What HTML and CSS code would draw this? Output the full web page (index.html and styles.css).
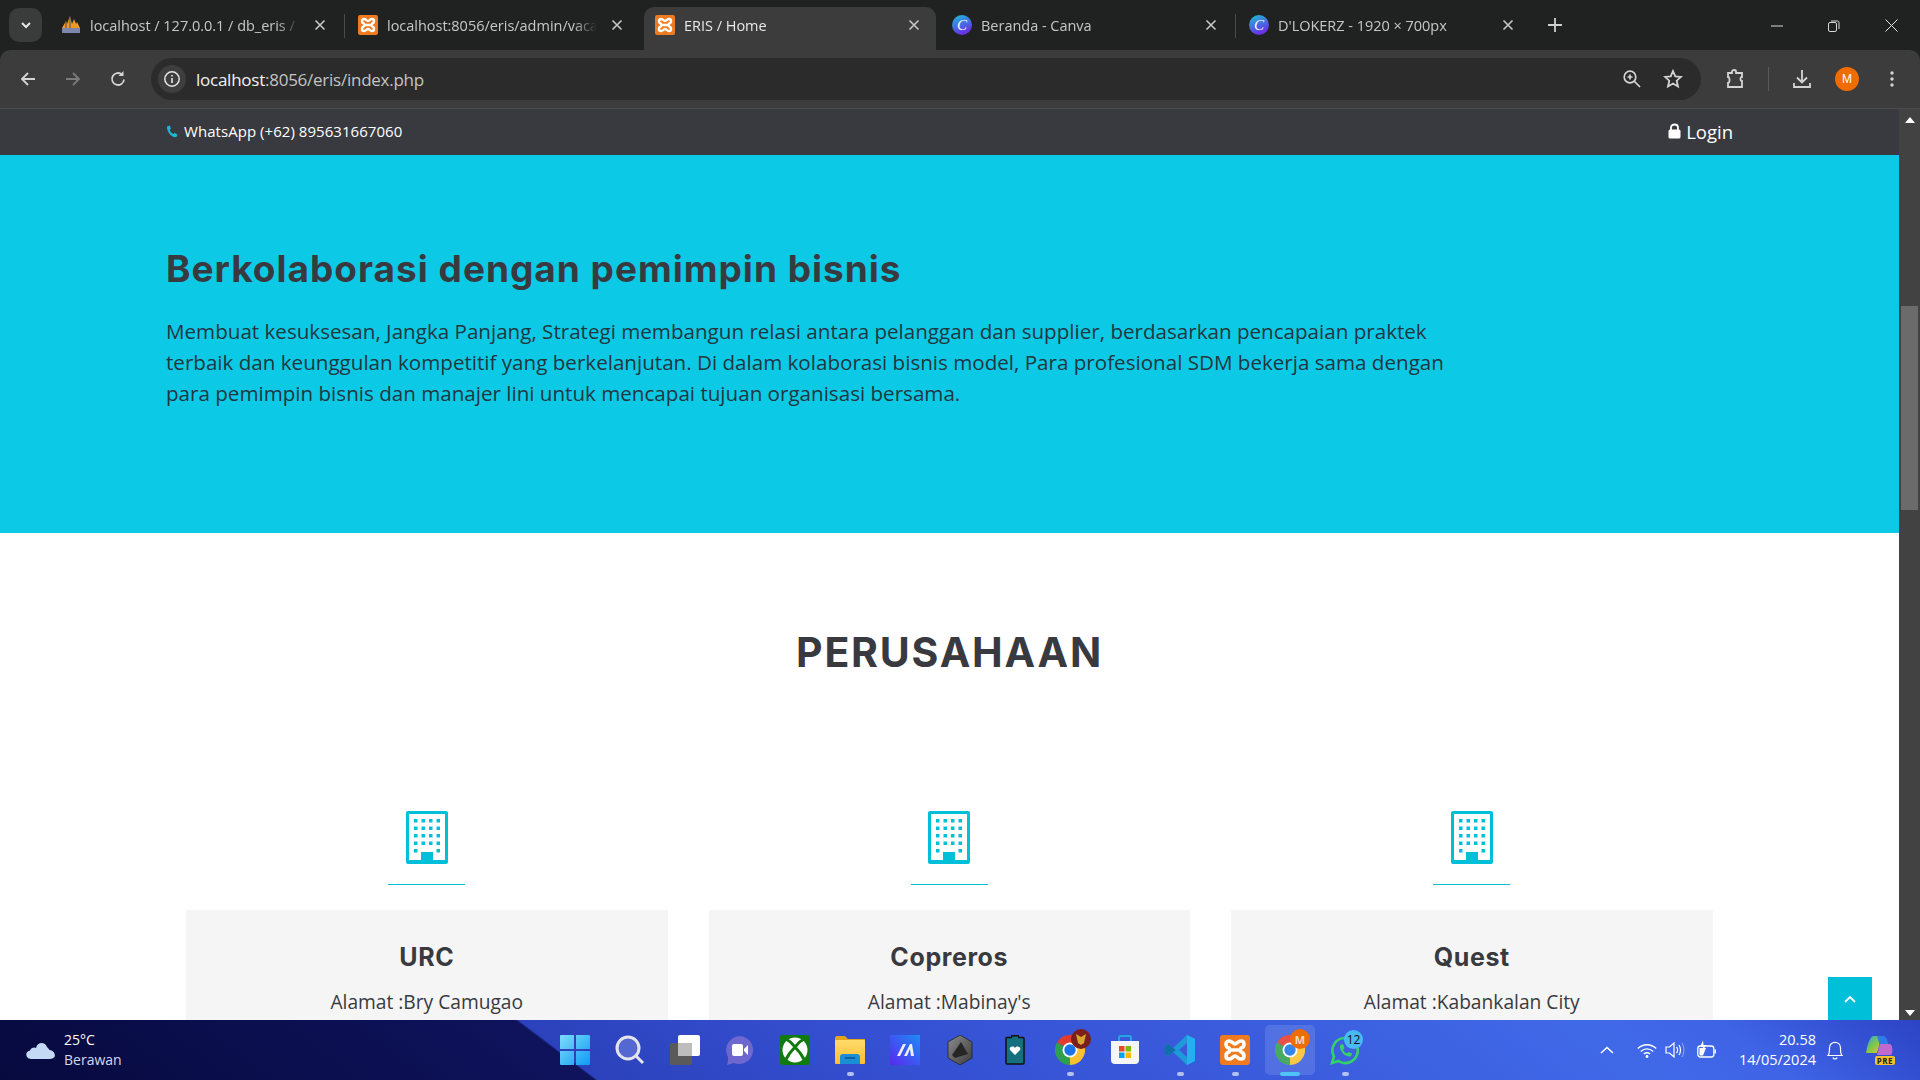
FILE: index.html
```html
<!DOCTYPE html>
<html lang="id">
<head>
    <meta charset="UTF-8">
    <title>ERIS / Home</title>
    <link rel="stylesheet" href="styles.css">
</head>
<body>
    <svg class="defs" width="0" height="0">
        <defs>
            <linearGradient id="canvaGrad" x1="0" y1="0" x2="0.4" y2="1">
                <stop offset="0" stop-color="#17c3d6"/>
                <stop offset="1" stop-color="#6a2ee8"/>
            </linearGradient>
            <linearGradient id="folderGrad" x1="0" y1="0" x2="0" y2="1">
                <stop offset="0" stop-color="#ffdc6c"/>
                <stop offset="1" stop-color="#fbbd2e"/>
            </linearGradient>
            <linearGradient id="vivaGrad" x1="0" y1="1" x2="1" y2="0">
                <stop offset="0" stop-color="#5b27f0"/>
                <stop offset="1" stop-color="#1c8cf5"/>
            </linearGradient>
            <linearGradient id="hexGrad" x1="0" y1="0" x2="1" y2="1">
                <stop offset="0" stop-color="#8d8d8d"/>
                <stop offset="1" stop-color="#3c3c3c"/>
            </linearGradient>
            <linearGradient id="winGrad" x1="0" y1="0" x2="1" y2="1">
                <stop offset="0" stop-color="#7fdcfb"/>
                <stop offset="1" stop-color="#0d9bf5"/>
            </linearGradient>
            <linearGradient id="copilotGrad" x1="0" y1="0" x2="1" y2="1">
                <stop offset="0" stop-color="#2a9cf0"/>
                <stop offset="0.5" stop-color="#7cc84a"/>
                <stop offset="1" stop-color="#f5c02c"/>
            </linearGradient>
            <symbol id="i-xampp" viewBox="0 0 30 30">
                <rect width="30" height="30" rx="3" fill="#ef7a20"/>
                <path d="M9 6C5 6 5 12 9 13L10 15L9 17C5 18 5 24 9 24C12 24 13 21 15 21C17 21 18 24 21 24C25 24 25 18 21 17L20 15L21 13C25 12 25 6 21 6C18 6 17 9 15 9C13 9 12 6 9 6ZM10 15H20" fill="none" stroke="#fff" stroke-width="3.600"/>
            </symbol>
            <symbol id="i-chrome" viewBox="0 0 30 30">
                <path d="M2 7.5A15 15 0 0 1 28 7.5L15 15Z" fill="#e33b2e"/>
                <path d="M28 7.5A15 15 0 0 1 15 30L15 15Z" fill="#fbc02d"/>
                <path d="M15 30A15 15 0 0 1 2 7.5L15 15Z" fill="#2e9e4f"/>
                <circle cx="15" cy="15" r="7.5" fill="#fff"/>
                <circle cx="15" cy="15" r="5.7" fill="#1a73e8"/>
            </symbol>
            <symbol id="i-canva" viewBox="0 0 20 20">
                <circle cx="10" cy="10" r="10" fill="url(#canvaGrad)"/>
                <text x="10" y="15" text-anchor="middle" font-family="Liberation Serif, serif" font-style="italic" font-size="15" fill="#fff">C</text>
            </symbol>
            <symbol id="i-close" viewBox="0 0 12 12">
                <path d="M1.5 1.5L10.5 10.5M10.5 1.5L1.5 10.5" stroke="#c7c7c7" stroke-width="1.6" fill="none"/>
            </symbol>
            <symbol id="i-building" viewBox="0 0 42 53">
                <rect width="42" height="53" rx="2" fill="#00bfd8"/>
                <rect x="3" y="3" width="36" height="46" fill="#fff"/>
                <path d="M8 8h3.500v3.500h-3.500zM15.500 8h3.500v3.500h-3.500zM23 8h3.500v3.500h-3.500zM30.500 8h3.500v3.500h-3.500zM8 15.500h3.500v3.500h-3.500zM15.500 15.500h3.500v3.500h-3.500zM23 15.500h3.500v3.500h-3.500zM30.500 15.500h3.500v3.500h-3.500zM8 23h3.500v3.500h-3.500zM15.500 23h3.500v3.500h-3.500zM23 23h3.500v3.500h-3.500zM30.500 23h3.500v3.500h-3.500zM8 30.500h3.500v3.500h-3.500zM15.500 30.500h3.500v3.500h-3.500zM23 30.500h3.500v3.500h-3.500zM30.500 30.500h3.500v3.500h-3.500zM8 38h3.500v3.500h-3.500zM30.500 38h3.500v3.500h-3.500zM15 41h12v9h-12z" fill="#00bfd8"/>
            </symbol>
        </defs>
    </svg>

    <header class="tabstrip">
        <button class="tab-search">
            <svg width="12" height="12" viewBox="0 0 12 12"><path d="M2 4L6 8L10 4" fill="none" stroke="#e6e6e6" stroke-width="2"/></svg>
        </button>
        <div class="tabs">
            <div class="tab">
                <svg class="favicon" viewBox="0 0 20 20">
                    <path d="M1 13L5 6L6 9L9 1L11 9L13 4L15 9L16 7L19 13Z" fill="#f29a1f"/>
                    <path d="M9 2L9 13M5 7L5 13" stroke="#3d4a78" stroke-width="1"/>
                    <rect x="1" y="13" width="18" height="5" fill="#7d86ad"/>
                </svg>
                <span class="tab-title">localhost / 127.0.0.1 / db_eris / t</span>
                <svg class="tab-close"><use href="#i-close"/></svg>
            </div>
            <div class="tab sep-right">
                <svg class="favicon"><use href="#i-xampp"/></svg>
                <span class="tab-title">localhost:8056/eris/admin/vacan</span>
                <svg class="tab-close"><use href="#i-close"/></svg>
            </div>
            <div class="tab active">
                <svg class="favicon"><use href="#i-xampp"/></svg>
                <span class="tab-title">ERIS / Home</span>
                <svg class="tab-close"><use href="#i-close"/></svg>
            </div>
            <div class="tab sep-right">
                <svg class="favicon"><use href="#i-canva"/></svg>
                <span class="tab-title">Beranda - Canva</span>
                <svg class="tab-close"><use href="#i-close"/></svg>
            </div>
            <div class="tab sep-right">
                <svg class="favicon"><use href="#i-canva"/></svg>
                <span class="tab-title">D'LOKERZ - 1920 × 700px</span>
                <svg class="tab-close"><use href="#i-close"/></svg>
            </div>
        </div>
        <svg class="new-tab" width="14" height="14" viewBox="0 0 14 14"><path d="M7 0V14M0 7H14" stroke="#d0d0d0" stroke-width="1.800"/></svg>
        <div class="win-controls">
            <svg width="12" height="12" viewBox="0 0 12 12"><path d="M0 6H12" stroke="#d8d8d8"/></svg>
            <svg width="12" height="12" viewBox="0 0 12 12"><rect x="0.500" y="2.500" width="8" height="9" rx="1.500" fill="none" stroke="#d8d8d8"/><path d="M3 1H9.500C10.500 1 11 1.500 11 2.500V9" fill="none" stroke="#d8d8d8"/></svg>
            <svg width="13" height="13" viewBox="0 0 13 13"><path d="M0.500 0.500L12.500 12.500M12.500 0.500L0.500 12.500" stroke="#e6e6e6"/></svg>
        </div>
    </header>

    <nav class="toolbar">
        <button class="tool-btn">
            <svg width="18" height="18" viewBox="0 0 18 18"><path d="M16 9H3M9 3L3 9L9 15" fill="none" stroke="#d4d4d4" stroke-width="1.800"/></svg>
        </button>
        <button class="tool-btn">
            <svg width="18" height="18" viewBox="0 0 18 18"><path d="M2 9H15M9 3L15 9L9 15" fill="none" stroke="#7b7b7b" stroke-width="1.800"/></svg>
        </button>
        <button class="tool-btn">
            <svg width="18" height="18" viewBox="0 0 18 18"><path d="M15 9.500A6 6 0 1 1 13 4.500" fill="none" stroke="#d4d4d4" stroke-width="1.800"/><path d="M14.500 1V6H9.500Z" fill="#d4d4d4"/></svg>
        </button>
        <div class="omnibox">
            <span class="info-chip">
                <svg width="18" height="18" viewBox="0 0 18 18"><circle cx="9" cy="9" r="7.200" fill="none" stroke="#e6e6e6" stroke-width="1.500"/><path d="M9 8V13M9 5V6.500" stroke="#e6e6e6" stroke-width="1.600"/></svg>
            </span>
            <span class="url"><b>localhost</b>:8056/eris/index.php</span>
            <span class="omni-actions">
                <svg width="20" height="20" viewBox="0 0 20 20"><circle cx="8" cy="8" r="5.800" fill="none" stroke="#d4d4d4" stroke-width="1.700"/><path d="M12 12L18 18M5.500 8H10.500M8 5.500V10.500" stroke="#d4d4d4" stroke-width="1.700"/></svg>
                <svg width="20" height="20" viewBox="0 0 20 20"><path d="M10 2L12.300 7.400L18 7.900L13.700 11.700L15 17.500L10 14.500L5 17.500L6.300 11.700L2 7.900L7.700 7.400Z" fill="none" stroke="#d4d4d4" stroke-width="1.800"/></svg>
            </span>
        </div>
        <button class="tool-btn after-omni">
            <svg width="20" height="22" viewBox="0 0 20 22"><path d="M3 5H7V3.500C7 1.500 11 1.500 11 3.500V5H17V9C15 8.500 15 13.500 17 13V19H3V15C5 15.500 5 8.500 3 9Z" fill="none" stroke="#d4d4d4" stroke-width="1.800"/></svg>
        </button>
        <span class="tool-divider"></span>
        <button class="tool-btn">
            <svg width="20" height="20" viewBox="0 0 20 20"><path d="M10 1V13M5 8.500L10 13.500L15 8.500M2 14V18H18V14" fill="none" stroke="#d4d4d4" stroke-width="1.800"/></svg>
        </button>
        <button class="tool-btn"><span class="avatar">M</span></button>
        <button class="tool-btn">
            <svg width="6" height="18" viewBox="0 0 6 18"><circle cx="3" cy="3" r="1.700" fill="#d4d4d4"/><circle cx="3" cy="9" r="1.700" fill="#d4d4d4"/><circle cx="3" cy="15" r="1.700" fill="#d4d4d4"/></svg>
        </button>
    </nav>

    <div class="window">
        <main class="page">
            <div class="topbar">
                <span class="topbar-phone">
                    <svg width="12" height="13" viewBox="0 0 12 13"><path d="M1 1.500L3.500 0.500L5 3.500L3.700 4.700C4.200 6.500 5.500 8.200 7.200 9L8.500 7.800L11.500 9.800L10.300 12.300C5.500 12.800 0.500 6.500 1 1.500Z" fill="#1fb6d2"/></svg>
                    WhatsApp (+62) 895631667060
                </span>
                <span class="topbar-login">
                    <svg width="13" height="16" viewBox="0 0 13 16"><path d="M3 7V4.500C3 0.500 10 0.500 10 4.500V7" fill="none" stroke="#fff" stroke-width="1.800"/><rect x="0.500" y="6.500" width="12" height="9" rx="1.500" fill="#fff"/></svg>
                    Login
                </span>
            </div>

            <section class="hero">
                <h2>Berkolaborasi dengan pemimpin bisnis</h2>
                <p>Membuat kesuksesan, Jangka Panjang, Strategi membangun relasi antara pelanggan dan supplier, berdasarkan pencapaian praktek terbaik dan keunggulan kompetitif yang berkelanjutan. Di dalam kolaborasi bisnis model, Para profesional SDM bekerja sama dengan para pemimpin bisnis dan manajer lini untuk mencapai tujuan organisasi bersama.</p>
            </section>

            <section class="companies">
                <h2>PERUSAHAAN</h2>
                <div class="company-grid">
                    <div class="company">
                        <svg class="company-icon"><use href="#i-building"/></svg>
                        <span class="company-line"></span>
                        <div class="company-card">
                            <h3>URC</h3>
                            <p>Alamat :Bry Camugao</p>
                        </div>
                    </div>
                    <div class="company">
                        <svg class="company-icon"><use href="#i-building"/></svg>
                        <span class="company-line"></span>
                        <div class="company-card">
                            <h3>Copreros</h3>
                            <p>Alamat :Mabinay's</p>
                        </div>
                    </div>
                    <div class="company">
                        <svg class="company-icon"><use href="#i-building"/></svg>
                        <span class="company-line"></span>
                        <div class="company-card">
                            <h3>Quest</h3>
                            <p>Alamat :Kabankalan City</p>
                        </div>
                    </div>
                </div>
            </section>

            <a class="to-top">
                <svg width="12" height="8" viewBox="0 0 12 8"><path d="M1 7L6 2L11 7" fill="none" stroke="#fff" stroke-width="1.800"/></svg>
            </a>
        </main>

        <aside class="scrollbar">
            <span class="arrow-up"></span>
            <span class="scroll-thumb"></span>
            <span class="arrow-down"></span>
        </aside>
    </div>

    <footer class="taskbar">
        <div class="weather">
            <svg width="31" height="20" viewBox="0 0 31 20"><path d="M6 19C1 19 -1 12 5 10.500C6 7 10 7 11 8C12 2 20 1 22 7C23 8 24 9 24.500 10C30 10 33 19 25 19Z" fill="#c4d9f4"/></svg>
            <div class="weather-text">
                <span class="temp">25°C</span>
                <span>Berawan</span>
            </div>
        </div>

        <div class="dock">
            <span class="dock-item">
                <svg viewBox="0 0 30 30"><path d="M0 1Q0 0 1 0H14V14H0ZM16 0H29Q30 0 30 1V14H16ZM0 16H14V30H1Q0 30 0 29ZM16 16H30V29Q30 30 29 30H16Z" fill="url(#winGrad)"/></svg>
            </span>
            <span class="dock-item">
                <svg viewBox="0 0 30 30"><circle cx="13" cy="13" r="11" fill="#5567d0" stroke="#e4e4ee" stroke-width="3"/><path d="M21 21L28 28" stroke="#e4e4ee" stroke-width="3"/></svg>
            </span>
            <span class="dock-item">
                <svg viewBox="0 0 30 30"><rect x="0" y="8" width="22" height="22" rx="2" fill="#5a5a5a"/><rect x="8" y="0" width="22" height="21" rx="2" fill="#fff"/><rect x="8" y="8" width="14" height="13" fill="#bdbdbd"/></svg>
            </span>
            <span class="dock-item">
                <svg viewBox="0 0 30 30"><path d="M15 1A14 14 0 1 1 9 28L2 30C3 27 3 26 3 22A14 14 0 0 1 15 1Z" fill="#6e67cf"/><rect x="7" y="9" width="11" height="12" rx="2" fill="#fff"/><path d="M19 14L23 10V20L19 16Z" fill="#fff"/></svg>
            </span>
            <span class="dock-item">
                <svg viewBox="0 0 30 30"><rect width="30" height="30" rx="2" fill="#107c10"/><circle cx="15" cy="15" r="12.500" fill="#fff"/><path d="M6 4C10 6 13 9 15 12C17 9 20 6 24 4M5 26C8 20 11 16 15 12C19 16 22 20 25 26" fill="none" stroke="#107c10" stroke-width="3"/></svg>
            </span>
            <span class="dock-item has-dot">
                <svg viewBox="0 0 30 30"><path d="M0 3Q0 1 2 1H10L13 4H30V10H0Z" fill="#e5a21c"/><rect y="5" width="30" height="24" rx="1" fill="url(#folderGrad)"/><path d="M5 29V22Q5 19 8 19H22Q25 19 25 22V29Z" fill="#1b8fd6"/><rect x="10" y="22" width="10" height="2" fill="#0f5f9e"/></svg>
            </span>
            <span class="dock-item">
                <svg viewBox="0 0 30 30"><rect width="30" height="30" fill="url(#vivaGrad)"/><path d="M7 21L13 9H16L10 21ZM14 21L20 9H22L24 21H21L20 14L17 21Z" fill="#fff" opacity="0.900"/></svg>
            </span>
            <span class="dock-item">
                <svg viewBox="0 0 30 30"><path d="M15 0L27 7V23L15 30L3 23V7Z" fill="url(#hexGrad)" stroke="#222" stroke-width="0.800"/><path d="M16 7L23 19L10 23L7 20Z" fill="#262626"/></svg>
            </span>
            <span class="dock-item">
                <svg viewBox="0 0 30 30"><rect x="11" y="0" width="8" height="4" fill="#111"/><rect x="6" y="2.500" width="18" height="26.500" rx="1" fill="#14707f" stroke="#111" stroke-width="1.500"/><rect x="12" y="1.500" width="6" height="3" fill="#14707f"/><path d="M15 20L10 15C8.500 12 13 10 15 13C17 10 21.500 12 20 15Z" fill="#fff"/></svg>
            </span>
            <span class="dock-item has-dot">
                <svg viewBox="0 0 30 30"><use href="#i-chrome"/></svg>
                <svg class="badge-shield" viewBox="0 0 20 20"><circle cx="10" cy="10" r="10" fill="#7a1f1c"/><path d="M5 5L10 8L15 5L13 14L10 16L7 14Z" fill="#d9a531"/></svg>
            </span>
            <span class="dock-item">
                <svg viewBox="0 0 30 30"><path d="M9 7V3Q9 1 11 1H19Q21 1 21 3V7" fill="none" stroke="#22a7e0" stroke-width="2"/><path d="M1 6H29V25Q29 29 25 29H5Q1 29 1 25Z" fill="#f6f6f6"/><rect x="9" y="11" width="5.500" height="5.500" fill="#e8472c"/><rect x="15.500" y="11" width="5.500" height="5.500" fill="#7fba00"/><rect x="9" y="17.500" width="5.500" height="5.500" fill="#00a4ef"/><rect x="15.500" y="17.500" width="5.500" height="5.500" fill="#ffb900"/></svg>
            </span>
            <span class="dock-item has-dot">
                <svg viewBox="0 0 30 30"><path d="M22 0L30 4V26L22 30L8 17L3 21L0 19V11L3 9L8 13ZM22 8L14 15L22 22Z" fill="#1e9ad8"/><path d="M22 0L30 4V26L22 30Z" fill="#27aef0"/><path d="M3 9L0 11V19L3 21L8 17L11 15L8 13Z" fill="#0f6fa8"/></svg>
            </span>
            <span class="dock-item has-dot">
                <svg viewBox="0 0 30 30"><use href="#i-xampp"/></svg>
            </span>
            <span class="dock-item has-dash is-active">
                <svg viewBox="0 0 30 30"><use href="#i-chrome"/></svg>
                <span class="badge-m">M</span>
            </span>
            <span class="dock-item has-dot">
                <svg viewBox="0 0 30 30"><path d="M15 3A12.500 12.500 0 1 1 8.500 26L2 28L4 21.500A12.500 12.500 0 0 1 15 3Z" fill="none" stroke="#35d366" stroke-width="2.600"/><path d="M10 10L13 9L14.500 13L13 14.500C14 16.500 15 17.500 17 18.500L18.500 17L22 18.500L21 21.500C15.500 22.500 9 16 10 10Z" fill="#35d366"/></svg>
                <span class="badge-count">12</span>
            </span>
        </div>

        <div class="tray">
            <svg class="tray-caret" width="14" height="8" viewBox="0 0 14 8"><path d="M1 7L7 1.500L13 7" fill="none" stroke="#fff" stroke-width="1.600"/></svg>
            <svg class="tray-wifi" width="20" height="15" viewBox="0 0 20 15"><path d="M0.800 5.500C6 0.500 14 0.500 19.200 5.500M3.800 8.500C7.500 5 12.500 5 16.200 8.500M6.800 11C8.700 9.500 11.300 9.500 13.200 11" fill="none" stroke="#fff" stroke-width="1.300"/><circle cx="10" cy="13.500" r="1.400" fill="#fff"/></svg>
            <svg class="tray-vol" width="20" height="18" viewBox="0 0 20 18"><path d="M1 6H4.500L9 2V16L4.500 12H1Z" fill="none" stroke="#fff" stroke-width="1.200"/><path d="M11.500 6C13 7.500 13 10.500 11.500 12M14 4C16 6.500 16 11.500 14 14" fill="none" stroke="#fff" stroke-width="1.200"/><path d="M17 2C19.500 6 19.500 12 17 16" fill="none" stroke="#9db0ee" stroke-width="1"/></svg>
            <svg class="tray-batt" width="20" height="20" viewBox="0 0 20 20"><rect x="0.800" y="6" width="16" height="11" rx="2.500" fill="none" stroke="#fff" stroke-width="1.300"/><path d="M17.500 9.500H19V13.500H17.500Z" fill="#fff"/><path d="M2.500 8H9L6 15.500H2.500Z" fill="#fff"/><path d="M6 0.500L3 7H6L5 11L9.500 5H6.500Z" fill="#fff"/></svg>
            <div class="clock">
                <span>20.58</span>
                <span>14/05/2024</span>
            </div>
            <svg class="tray-bell" width="16" height="19" viewBox="0 0 16 19"><path d="M1 14.500C2.500 13 2.500 11 2.500 7C2.500 -0.500 13.500 -0.500 13.500 7C13.500 11 13.500 13 15 14.500Z" fill="none" stroke="#fff" stroke-width="1.200"/><path d="M6 16.500C6.500 18.500 9.500 18.500 10 16.500" fill="none" stroke="#fff" stroke-width="1.200"/></svg>
            <span class="copilot">
                <svg width="28" height="24" viewBox="0 0 28 24"><path d="M8 1H17L12 18H1C2 12 4 3 8 1Z" fill="url(#copilotGrad)"/><path d="M12 1H19C22 2 23 8 24 11H15Z" fill="#2f7ce8"/><path d="M15 9H25C28 10 28 18 26 20H12Z" fill="#c06ad0"/></svg>
                <span class="pre">PRE</span>
            </span>
        </div>
    </footer>
</body>
</html>
```

FILE: styles.css
```css
* {
    box-sizing: border-box;
}
html, body {
    height: 100%;
}
body {
    margin: 0;
    display: flex;
    flex-direction: column;
    height: 1080px;
    overflow: hidden;
    background: #202222;
    font-family: 'Open Sans', sans-serif;
}
button {
    background: none;
    border: none;
    padding: 0;
}
.defs {
    position: absolute;
}

/* browser tabs */
.tabstrip {
    height: 50px;
    display: flex;
    align-items: flex-end;
    background: #202222;
    position: relative;
}
.tab-search {
    width: 33px;
    height: 34px;
    margin: 0 8px 8px 9px;
    border-radius: 10px;
    background: #3a3b3b;
    display: flex;
    align-items: center;
    justify-content: center;
}
.tabs {
    display: flex;
    gap: 5px;
}
.tab {
    width: 292px;
    height: 43px;
    padding: 0 16px 7px 11px;
    display: flex;
    align-items: center;
    gap: 9px;
    color: #c7c7c7;
    font-size: 14.5px;
    border-radius: 10px 10px 0 0;
    position: relative;
}
.tab.active {
    background: #3c3c3c;
    color: #e8e8e8;
}
.sep-right::before {
    content: '';
    position: absolute;
    left: -3px;
    top: 7px;
    width: 1px;
    height: 24px;
    background: #4a4c4c;
}
.tab.active + .tab::before {
    display: none;
}
.favicon {
    width: 20px;
    height: 20px;
    flex: none;
}
.tab-title {
    flex: 1;
    white-space: nowrap;
    overflow: hidden;
    letter-spacing: -0.02px;
    -webkit-mask-image: linear-gradient(to right, #000 88%, transparent 99%);
}
.tab-close {
    width: 12px;
    height: 12px;
    flex: none;
    margin-left: 3px;
}
.new-tab {
    margin: 0 0 18px 18px;
}
.win-controls {
    margin-left: auto;
    display: flex;
    align-items: center;
    gap: 45px;
    padding: 0 22px 18px 0;
}

/* browser toolbar */
.toolbar {
    height: 59px;
    padding: 0 10px;
    display: flex;
    align-items: center;
    gap: 9px;
    background: #3c3c3c;
    border-bottom: 1px solid #4b4b4b;
    border-radius: 10px 10px 0 0;
}
.tool-btn {
    width: 36px;
    height: 36px;
    flex: none;
    display: flex;
    align-items: center;
    justify-content: center;
}
.omnibox {
    width: 1552px;
    height: 42px;
    margin-left: 6px;
    padding: 0 7px;
    display: flex;
    align-items: center;
    background: #2b2b2b;
    border-radius: 21px;
}
.info-chip {
    width: 28px;
    height: 28px;
    margin-right: 10px;
    border-radius: 50%;
    background: #3e3e3e;
    display: flex;
    align-items: center;
    justify-content: center;
}
.url {
    font-size: 17px;
    letter-spacing: -0.25px;
    color: #c4c4c4;
}
.url b {
    font-weight: 400;
    color: #f2f2f2;
}
.omni-actions {
    margin-left: auto;
    display: flex;
    gap: 21px;
    padding-right: 11px;
}
.after-omni {
    margin-left: 7px;
}
.tool-divider {
    width: 1px;
    height: 24px;
    margin: 0 6px;
    background: #5a5a5a;
}
.avatar {
    width: 24px;
    height: 24px;
    border-radius: 50%;
    background: #ef6c00;
    color: #fff;
    font-size: 12px;
    display: flex;
    align-items: center;
    justify-content: center;
}

/* page area */
.window {
    flex: 1;
    min-height: 0;
    display: flex;
}
.page {
    flex: 1;
    min-width: 0;
    background: #fff;
    overflow: hidden;
    position: relative;
}
.topbar {
    height: 46px;
    padding: 0 166px 2px 166px;
    display: flex;
    align-items: center;
    justify-content: space-between;
    background: #383a3f;
    color: #fff;
}
.topbar-phone {
    display: flex;
    align-items: center;
    gap: 6px;
    font-size: 15px;
    letter-spacing: 0.05px;
}
.topbar-login {
    display: flex;
    align-items: center;
    gap: 5px;
    font-size: 18.5px;
}
.hero {
    height: 378px;
    padding: 92px 0 0 166px;
    background: #0ccae6;
}
.hero h2 {
    margin: 0 0 25px;
    font-family: 'Inter', sans-serif;
    font-size: 37px;
    font-weight: 700;
    letter-spacing: 1px;
    line-height: 44px;
    color: #383a3f;
}
.hero p {
    width: 1290px;
    margin: 0;
    font-size: 20.6px;
    line-height: 31px;
    color: #22363f;
}
.companies {
    padding-top: 95px;
}
.companies h2 {
    margin: 0 0 135px;
    text-align: center;
    font-family: 'Inter', sans-serif;
    font-size: 41px;
    font-weight: 700;
    letter-spacing: 1.8px;
    line-height: 48px;
    color: #383a3f;
}
.company-grid {
    display: grid;
    grid-template-columns: repeat(3, 481.5px);
    gap: 41px;
    padding-left: 186px;
}
.company {
    display: flex;
    flex-direction: column;
    align-items: center;
}
.company-icon {
    width: 42px;
    height: 53px;
}
.company-line {
    width: 77px;
    height: 1px;
    margin: 20px 0 25px;
    background: #00bfd8;
}
.company-card {
    width: 100%;
    height: 200px;
    padding-top: 30px;
    background: #f5f5f5;
    text-align: center;
}
.company-card h3 {
    margin: 0 0 14px;
    font-family: 'Inter', sans-serif;
    font-size: 25px;
    font-weight: 700;
    letter-spacing: 0.6px;
    line-height: 34px;
    color: #383a3f;
}
.company-card p {
    margin: 0;
    font-size: 19.2px;
    line-height: 28px;
    color: #383a3f;
}
.to-top {
    position: absolute;
    right: 27px;
    bottom: 0;
    width: 44px;
    height: 43px;
    background: #00bfd8;
    display: flex;
    align-items: center;
    justify-content: center;
}

/* scrollbar */
.scrollbar {
    width: 21px;
    padding: 8px 0 0;
    background: #424242;
    display: flex;
    flex-direction: column;
    align-items: center;
}
.arrow-up, .arrow-down {
    width: 0;
    height: 0;
    border-left: 5px solid transparent;
    border-right: 5px solid transparent;
}
.arrow-up {
    border-bottom: 6px solid #fff;
}
.arrow-down {
    margin-top: auto;
    margin-bottom: 4px;
    border-top: 6px solid #fff;
}
.scroll-thumb {
    width: 17px;
    height: 204px;
    margin-top: 183px;
    background: #6b6b6b;
}

/* windows taskbar */
.taskbar {
    height: 60px;
    flex: none;
    display: grid;
    grid-template-columns: 560px auto 1fr;
    align-items: center;
    background: linear-gradient(37deg, #070a3e 0, #0e135c 358px, #2c42bc 360px, #3550d2 560px, #4069e8 1000px, #3f64e6 1080px, #2d44c6 1200px);
    color: #fff;
}
.weather {
    display: flex;
    align-items: center;
    gap: 8px;
    padding-left: 25px;
}
.weather-text {
    display: flex;
    flex-direction: column;
    font-size: 14px;
    line-height: 20px;
    color: #d4d9ec;
}
.weather-text .temp {
    color: #fff;
}
.dock {
    display: flex;
    gap: 25px;
}
.dock-item {
    width: 30px;
    height: 30px;
    position: relative;
}
.dock-item > svg {
    display: block;
    width: 30px;
    height: 30px;
}
.has-dot::after, .has-dash::after {
    content: '';
    position: absolute;
    top: 37px;
    left: 12px;
    width: 7px;
    height: 4px;
    border-radius: 2px;
    background: #b4c0f0;
}
.has-dash::after {
    left: 5px;
    width: 20px;
    background: #4fc3f7;
}
.is-active::before {
    content: '';
    position: absolute;
    inset: -10px -10px -10px -10px;
    border-radius: 5px;
    background: rgba(255, 255, 255, 0.12);
}
.dock-item > .badge-shield {
    position: absolute;
    top: -6px;
    left: 16px;
    width: 20px;
    height: 20px;
}
.badge-m {
    position: absolute;
    top: -6px;
    left: 15px;
    width: 20px;
    height: 20px;
    border-radius: 50%;
    background: #ef6c00;
    color: #f6d8c0;
    font-size: 11px;
    font-weight: 700;
    display: flex;
    align-items: center;
    justify-content: center;
}
.badge-count {
    position: absolute;
    top: -5px;
    left: 14px;
    width: 19px;
    height: 19px;
    border-radius: 50%;
    background: #49b9f5;
    color: #111;
    font-size: 12px;
    display: flex;
    align-items: center;
    justify-content: center;
}
.tray {
    display: flex;
    align-items: center;
    justify-content: flex-end;
    padding-right: 25px;
}
.tray-caret {
    margin-right: 23px;
}
.tray-wifi {
    margin-right: 8px;
}
.tray-vol {
    margin-right: 12px;
}
.clock {
    margin: 0 11px 0 22px;
    display: flex;
    flex-direction: column;
    align-items: flex-end;
    font-size: 14.5px;
    line-height: 20px;
}
.copilot {
    margin-left: 22px;
    width: 30px;
    height: 30px;
    position: relative;
    display: block;
}
.pre {
    position: absolute;
    right: 0;
    bottom: 0;
    padding: 0 2px;
    border-radius: 2px;
    background: #f5c02c;
    color: #222;
    font-size: 8px;
    line-height: 9px;
    font-weight: 700;
    letter-spacing: 0.5px;
}
```
